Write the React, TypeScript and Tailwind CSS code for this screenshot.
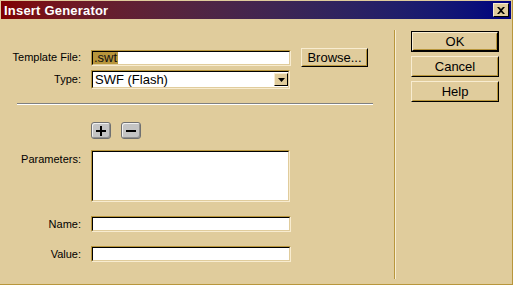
import * as React from 'react'

const font = { fontFamily: '"Liberation Sans", Arial, sans-serif' }

function Sunken({ w, h, children }: { w: string; h: string; children?: React.ReactNode }) {
    return (
        <div className={`${w} ${h} flex border border-t-[#b8963c] border-l-[#b8963c] border-b-[#f8ecd0] border-r-[#f8ecd0]`}>
            <div className="flex flex-1 items-center border border-t-black border-l-black border-b-[#e0cc9c] border-r-[#e0cc9c] bg-white overflow-hidden">
                {children}
            </div>
        </div>
    )
}

function Raised({ w, h, label, isDefault = false }: { w: string; h: string; label: string; isDefault?: boolean }) {
    const inner = (
        <div className="flex flex-1 border border-t-[#f8ecd0] border-l-[#f8ecd0] border-b-black border-r-black">
            <div className="flex flex-1 items-center justify-center border border-t-[#e0cc9c] border-l-[#e0cc9c] border-b-[#b8963c] border-r-[#b8963c] text-[13px] leading-none text-black">
                {label}
            </div>
        </div>
    )
    return (
        <div className={`${w} ${h} flex ${isDefault ? 'border border-black' : ''}`}>
            {inner}
        </div>
    )
}

function Label({ text, className = '' }: { text: string; className?: string }) {
    return <div className={`w-[80px] shrink-0 text-right text-[11px] leading-[13px] text-black ${className}`}>{text}</div>
}

function IconBtn({ sign }: { sign: '+' | '-' }) {
    return (
        <div className="w-[20px] h-[17px] rounded-[3px] border border-[#707070] bg-[#c4c4c4] flex shadow-[inset_1px_1px_0_#f0f0f0,inset_-1px_-1px_0_#909090] items-center justify-center">
            <svg width="10" height="10" viewBox="0 0 10 10">
                <rect x="0" y="4" width="10" height="2" fill="#000" />
                {sign === '+' && <rect x="4" y="0" width="2" height="10" fill="#000" />}
            </svg>
        </div>
    )
}

export default function App() {
    return (
        <div className="w-[513px] h-[285px] bg-[#e0cc9c] pt-[1px] px-[1px] border-r border-b border-[#b8963c] flex flex-col" style={font}>
            {/* Title bar */}
            <div className="h-[18px] shrink-0 flex items-center justify-between bg-linear-to-r from-[#800000] to-[#000080]">
                <span className="pl-[3px] text-[13px] font-bold text-white leading-none tracking-[0.2px]">Insert Generator</span>
                <div className="mr-[2px] w-[16px] h-[14px] flex border border-t-[#f8ecd0] border-l-[#f8ecd0] border-b-black border-r-black bg-[#e0cc9c] items-center justify-center">
                    <svg width="8" height="7" viewBox="0 0 8 7">
                        <path d="M0 0 L2 0 L4 2 L6 0 L8 0 L5 3.5 L8 7 L6 7 L4 5 L2 7 L0 7 L3 3.5 Z" fill="#000" />
                    </svg>
                </div>
            </div>

            <div className="flex flex-1">
                {/* Left pane */}
                <div className="w-[393px] shrink-0 flex flex-col">
                    <div className="mt-[29px] h-[19px] flex items-start">
                        <Label text="Template File:" className="mt-[3px]" />
                        <div className="ml-[10px] mt-[2px]">
                            <Sunken w="w-[200px]" h="h-[16px]">
                                <span className="bg-[#b8963c] text-[13px] leading-[12px] h-[12px] px-[1px] text-[#101010]">.swt</span>
                            </Sunken>
                        </div>
                        <div className="ml-[10px]">
                            <Raised w="w-[67px]" h="h-[19px]" label="Browse..." />
                        </div>
                    </div>
                    <div className="mt-[3px] h-[19px] flex items-center">
                        <Label text="Type:" />
                        <div className="ml-[10px] w-[199px] h-[19px] flex border border-t-[#b8963c] border-l-[#b8963c] border-b-[#f8ecd0] border-r-[#f8ecd0]">
                            <div className="flex flex-1 items-center border border-t-black border-l-black border-b-[#e0cc9c] border-r-[#e0cc9c] bg-white">
                                <span className="flex-1 pl-[2px] text-[13px] leading-none">SWF (Flash)</span>
                                <div className="w-[14px] h-[13px] flex border border-t-[#f8ecd0] border-l-[#f8ecd0] border-b-black border-r-black bg-[#e0cc9c] items-center justify-center">
                                    <svg width="7" height="4" viewBox="0 0 7 4">
                                        <path d="M0 0 L7 0 L3.5 4 Z" fill="#000" />
                                    </svg>
                                </div>
                            </div>
                        </div>
                    </div>

                    <div className="mt-[14px] ml-[16px] w-[356px] h-[2px] border-t border-t-[#808080] border-b border-b-white" />

                    <div className="mt-[17px] ml-[90px] flex gap-[10px]">
                        <IconBtn sign="+" />
                        <IconBtn sign="-" />
                    </div>

                    <div className="mt-[11px] flex">
                        <Label text="Parameters:" className="pt-[3px]" />
                        <div className="ml-[10px]">
                            <Sunken w="w-[199px]" h="h-[52px]" />
                        </div>
                    </div>

                    <div className="mt-[14px] flex items-center">
                        <Label text="Name:" />
                        <div className="ml-[10px]">
                            <Sunken w="w-[200px]" h="h-[16px]" />
                        </div>
                    </div>

                    <div className="mt-[14px] flex items-center">
                        <Label text="Value:" />
                        <div className="ml-[10px]">
                            <Sunken w="w-[200px]" h="h-[16px]" />
                        </div>
                    </div>
                </div>

                {/* Vertical separator */}
                <div className="mt-[11px] w-[2px] h-[249px] border-l border-l-[#b8963c] border-r border-r-[#f8ecd0]" />

                {/* Right pane */}
                <div className="pl-[15px] pt-[12px] flex flex-col gap-[4px]">
                    <Raised w="w-[88px]" h="h-[21px]" label="OK" isDefault />
                    <Raised w="w-[88px]" h="h-[21px]" label="Cancel" />
                    <Raised w="w-[88px]" h="h-[21px]" label="Help" />
                </div>
            </div>
        </div>
    )
}
